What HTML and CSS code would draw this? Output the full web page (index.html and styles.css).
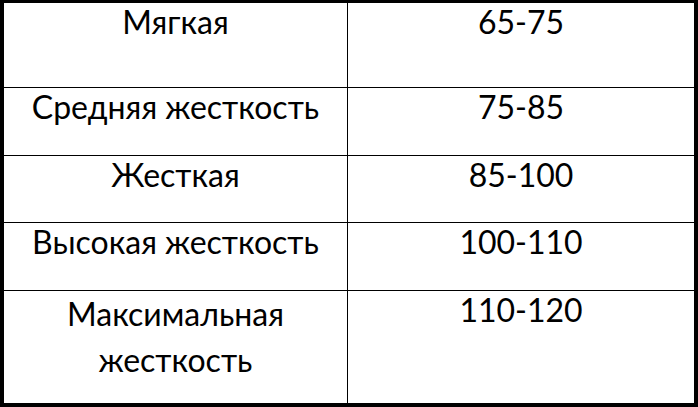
FILE: index.html
```html
<!DOCTYPE html>
<html lang="ru">
<head>
<meta charset="utf-8">
<title>Жесткость</title>
<link rel="stylesheet" href="styles.css">
</head>
<body>
<div class="table">
  <div class="row r1"><div class="cell c1">Мягкая</div><div class="cell c2">65-75</div></div>
  <div class="row r2"><div class="cell c1">Средняя жесткость</div><div class="cell c2">75-85</div></div>
  <div class="row r3"><div class="cell c1">Жесткая</div><div class="cell c2">85-100</div></div>
  <div class="row r4"><div class="cell c1">Высокая жесткость</div><div class="cell c2">100-110</div></div>
  <div class="row r5"><div class="cell c1 multi">Максимальная<br>жесткость</div><div class="cell c2">110-120</div></div>
</div>
</body>
</html>
```
FILE: styles.css
```css
html, body {
  margin: 0;
  padding: 0;
  background: #ffffff;
}
.table {
  box-sizing: border-box;
  width: 698px;
  height: 407px;
  border-top: 3px solid #000;
  border-left: 4px solid #000;
  border-right: 4px solid #000;
  border-bottom: 4px solid #000;
  display: grid;
  grid-template-rows: 85px 68px 67px 68px 112px;
  font-family: Lato, "Noto Sans", sans-serif;
  font-size: 32px;
  color: #000;
}
.row {
  display: grid;
  grid-template-columns: 344px 346px;
  border-bottom: 1px solid #000;
}
.r5 { border-bottom: none; }
.cell {
  text-align: center;
  line-height: 38px;
}
.c1 {
  border-right: 1px solid #000;
}
.multi {
  line-height: 46px;
}
```
